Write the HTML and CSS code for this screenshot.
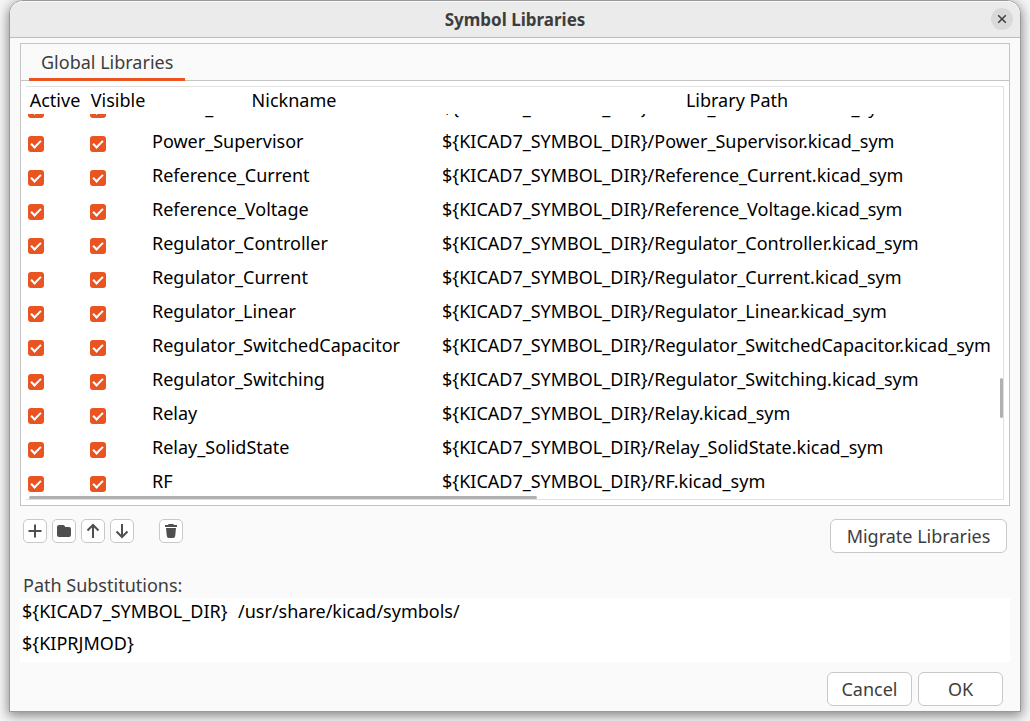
FILE: index.html
```
<!DOCTYPE html>
<html lang="en">
<head>
<meta charset="utf-8">
<title>Symbol Libraries</title>
<link rel="stylesheet" href="styles.css">
</head>
<body>
<main class="dialog">
  <header class="titlebar">
    <h1 class="title">Symbol Libraries</h1>
    <button class="close" aria-label="Close"><svg width="22" height="22" viewBox="0 0 22 22"><path d="M7.2 7.2l7.6 7.6M14.8 7.2l-7.6 7.6" stroke="#3d3d3d" stroke-width="1.5" fill="none"/></svg></button>
  </header>
  <div class="content">
    <section class="notebook">
      <div class="tabs" role="tablist"><button class="tab" role="tab" aria-selected="true">Global Libraries</button></div>
      <div class="page">
        <div class="frame">
          <table class="grid">
            <thead><tr><th>Active</th><th>Visible</th><th>Nickname</th><th>Library Path</th></tr></thead>
            <tbody id="rows"></tbody>
          </table>
          <span class="bar-x"></span>
          <span class="bar-y"></span>
        </div>
      </div>
    </section>
    <div class="toolbar">
      <button class="tool" aria-label="Add library"><svg width="22" height="22" viewBox="0 0 22 22"><path d="M11 4.500v13M4.500 11h13" stroke="#4f4f4f" stroke-width="2"/></svg></button>
      <button class="tool" aria-label="Add existing library"><svg width="22" height="22" viewBox="0 0 22 22"><path d="M4 7q0-2 2-2h4q1 0 1.500.8l.8 1.200H16q2 0 2 2v6q0 2-2 2H6q-2 0-2-2z" fill="#4f4f4f"/></svg></button>
      <button class="tool" aria-label="Move up"><svg width="22" height="22" viewBox="0 0 22 22"><path d="M11 18V5M5.500 10.500L11 5l5.500 5.500" stroke="#4f4f4f" stroke-width="2" fill="none"/></svg></button>
      <button class="tool" aria-label="Move down"><svg width="22" height="22" viewBox="0 0 22 22"><path d="M11 4v13M5.500 11.500L11 17l5.500-5.500" stroke="#4f4f4f" stroke-width="2" fill="none"/></svg></button>
      <button class="tool remove" aria-label="Remove library"><svg width="22" height="22" viewBox="0 0 22 22"><path d="M5 5h3q.3-1 1.300-1h3.400q1 0 1.300 1h3v2H5zM6 8h10l-.8 8q-.2 2-2.200 2H9q-2 0-2.200-2z" fill="#4f4f4f"/></svg></button>
      <button class="button migrate">Migrate Libraries</button>
    </div>
    <h2 class="label" id="subs">Path Substitutions:</h2>
    <table class="subs" aria-labelledby="subs">
      <tbody>
        <tr><td>${KICAD7_SYMBOL_DIR}</td><td>/usr/share/kicad/symbols/</td></tr>
        <tr><td>${KIPRJMOD}</td><td></td></tr>
      </tbody>
    </table>
    <footer class="actions">
      <button class="button action">Cancel</button>
      <button class="button action">OK</button>
    </footer>
  </div>
</main>
<script src="rows.js"></script>
</body>
</html>
```
FILE: rows.js
```
const names = ["Power_Protection", "Power_Supervisor", "Reference_Current", "Reference_Voltage",
  "Regulator_Controller", "Regulator_Current", "Regulator_Linear", "Regulator_SwitchedCapacitor",
  "Regulator_Switching", "Relay", "Relay_SolidState", "RF"];
document.getElementById("rows").innerHTML = names.map(n => `<tr>
  <td><input type="checkbox" class="check" checked aria-label="${n} active"></td>
  <td><input type="checkbox" class="check" checked aria-label="${n} visible"></td>
  <td>${n}</td>
  <td>\${KICAD7_SYMBOL_DIR}/${n}.kicad_sym</td>
</tr>`).join("");
```
FILE: styles.css
```
*, *::before { box-sizing: border-box; }
body {
  margin: 0;
  background: #f6f6f6;
  color: #3d3d3d;
  font: 18px/24px "Noto Sans", sans-serif;
  overflow: hidden;
}
button { font: inherit; color: inherit; padding: 0; }
svg { display: block; }
.dialog {
  display: flex;
  flex-direction: column;
  height: calc(100vh - 9px);
  margin: 0 9px 9px;
  border: 1px solid #999;
  border-radius: 14px 14px 0 0;
  background: #fafafa;
  box-shadow: 0 3px 12px 1px rgba(0, 0, 0, 0.45);
}
.titlebar {
  display: grid;
  grid-template-columns: 1fr auto 1fr;
  align-items: center;
  height: 37px;
  padding: 0 7px;
  border-bottom: 1px solid #bdbdbd;
  border-radius: 13px 13px 0 0;
  background: #ebebeb;
  box-shadow: inset 0 1px #f8f8f8;
}
.title { grid-column: 2; margin: 0; padding-top: 1px; font-size: 17px; line-height: 24px; font-weight: 700; }
.close {
  justify-self: end;
  width: 22px;
  height: 22px;
  border: 0;
  border-radius: 50%;
  background: #d9d9d9;
}
.content { flex: 1; min-height: 0; display: flex; flex-direction: column; padding: 5px 10px; }
.notebook { flex: 1; min-height: 0; display: flex; flex-direction: column; border: 1px solid #c4c4c4; }
.tabs { display: flex; height: 37px; padding-left: 8px; border-bottom: 1px solid #c4c4c4; }
.tab {
  height: 37px;
  padding: 2px 12px 0;
  border: 0;
  border-bottom: 3px solid #e95420;
  background: none;
}
.page { flex: 1; min-height: 0; display: flex; padding: 5px; background: #fff; }
.frame {
  position: relative;
  flex: 1;
  min-width: 0;
  display: flex;
  overflow: hidden;
  border: 1px solid #e0e0e0;
  border-left: 0;
  color: #000;
}
.grid { flex: 1; min-width: 0; display: flex; flex-direction: column; }
.grid thead { display: block; }
.grid tbody {
  flex: 1;
  min-height: 0;
  display: flex;
  flex-direction: column;
  justify-content: flex-end;
  overflow: hidden;
}
.grid tr { flex: none; display: grid; grid-template-columns: 61px 62px 290px minmax(596px, 1fr); }
.grid th { padding: 1px 0 2px; font-weight: 400; text-align: center; }
.grid th:first-child { padding-right: 3px; }
.grid td { height: 34px; padding: 4px 3px; white-space: nowrap; }
.grid td:first-child { padding-left: 2px; }
.check {
  appearance: none;
  display: grid;
  width: 16px;
  height: 16px;
  margin: 7px 0 0;
  border-radius: 3px;
  background: #e95420;
}
.check:checked::before {
  content: "";
  width: 10px;
  height: 6px;
  margin: 4px 0 0 3px;
  border: solid #fff;
  border-width: 0 0 2px 2px;
  transform: rotate(-45deg);
}
.bar-x { position: absolute; left: 3px; bottom: 0; width: 52%; height: 3px; border-radius: 2px; background: #b0b0b0; }
.bar-y { position: absolute; right: 0; top: 291px; width: 3px; height: 40px; border-radius: 2px; background: #b0b0b0; }
.toolbar { display: flex; align-items: flex-start; gap: 5px; padding: 13px 3px 0; }
.tool {
  width: 24px;
  height: 24px;
  border: 1px solid #c8c8c8;
  border-radius: 5px;
  background: #fff;
}
.remove { margin-left: 20px; }
.button {
  height: 34px;
  border: 1px solid #c8c8c8;
  border-radius: 6px;
  background: #fff;
}
.migrate { width: 177px; margin-left: auto; }
.label { margin: 20px 3px 1px; font-size: 18px; line-height: 24px; font-weight: 400; }
.subs { border-collapse: collapse; background: #fff; color: #000; }
.subs td { height: 32px; padding: 0 0 7px 2px; }
.subs td:first-child { width: 216px; }
.actions { display: flex; justify-content: flex-end; gap: 6px; padding: 10px 7px 0; }
.action { width: 85px; }
```
